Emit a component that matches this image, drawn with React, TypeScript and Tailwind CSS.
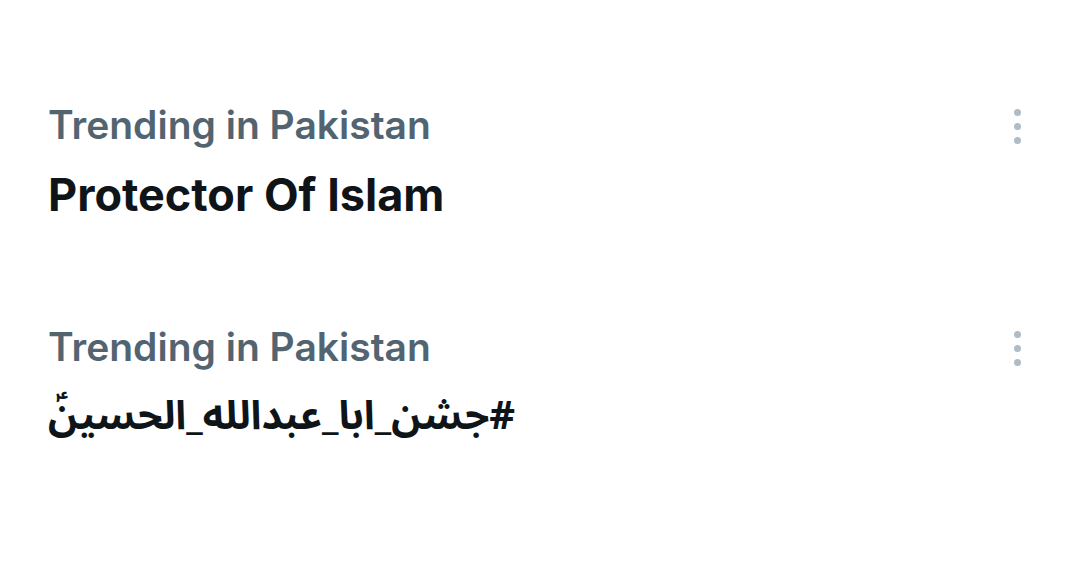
const trends = [
  { context: "Trending in Pakistan", title: "Protector Of Islam", rtl: false },
  { context: "Trending in Pakistan", title: "#جشن_ابا_عبدالله_الحسينؑ", rtl: true },
];

function MoreDots() {
  return (
    <div className="flex flex-col items-center gap-[7px]">
      <span className="block h-[7px] w-[7px] rounded-full bg-[#b0bcc5]" />
      <span className="block h-[7px] w-[7px] rounded-full bg-[#b0bcc5]" />
      <span className="block h-[7px] w-[7px] rounded-full bg-[#b0bcc5]" />
    </div>
  );
}

export default function App() {
  return (
    <div
      className="w-[1078px] h-[565px] bg-white pt-[100px]"
      style={{ fontFamily: "Inter, 'DejaVu Sans', sans-serif" }}
    >
      {trends.map((t, i) => (
        <div key={i} className="flex justify-between pl-[48px] pr-[57px] h-[222px]">
          <div className="flex flex-col">
            <div className="text-[39px] leading-[50px] font-semibold text-[#536471]">{t.context}</div>
            <div
              dir={t.rtl ? "rtl" : undefined}
              className={
                t.rtl
                  ? "mt-[18px] text-[40px] leading-[54px] font-bold text-[#0f1419] text-left self-start"
                  : "mt-[18px] text-[45px] leading-[54px] font-bold text-[#0f1419] text-left self-start"
              }
              style={
                t.rtl
                  ? { fontFamily: "'Noto Sans Arabic', 'Noto Naskh Arabic', 'DejaVu Sans', sans-serif" }
                  : undefined
              }
            >
              {t.title}
            </div>
          </div>
          <div className="pt-[9px]">
            <MoreDots />
          </div>
        </div>
      ))}
    </div>
  );
}
